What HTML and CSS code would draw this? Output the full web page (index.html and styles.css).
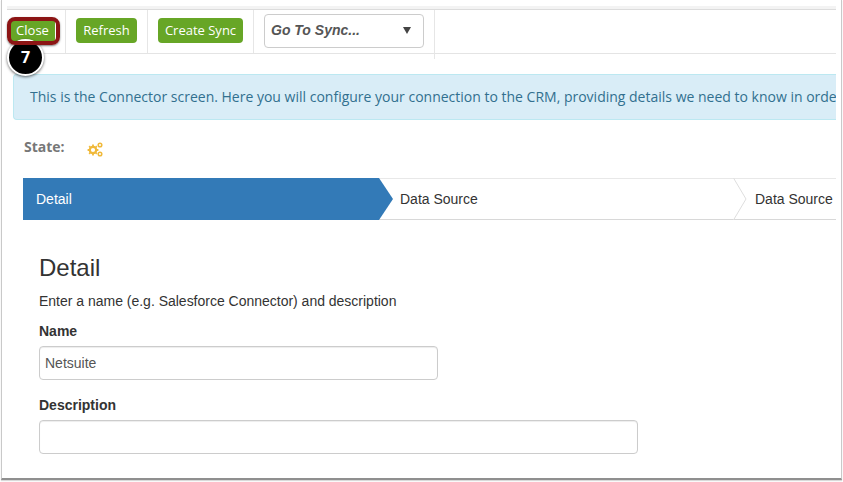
FILE: index.html
```html
<!DOCTYPE html>
<html lang="en">
<head>
<meta charset="utf-8">
<title>Connector</title>
<link rel="stylesheet" href="styles.css">
</head>
<body>
<div class="window">
  <div class="page">
    <div class="topband"></div>
    <div class="toolbar">
      <div class="tool tool-close"><button class="btn">Close</button></div>
      <div class="tool tool-refresh"><button class="btn">Refresh</button></div>
      <div class="tool tool-create"><button class="btn">Create Sync</button></div>
      <div class="tool tool-select">
        <div class="select"><span>Go To Sync...</span><i class="caret"></i></div>
      </div>
    </div>
    <div class="alert">This is the Connector screen. Here you will configure your connection to the CRM, providing details we need to know in order to connect to your data and keep it in sync.</div>
    <div class="state">
      <span class="state-label">State:</span>
      <svg class="gears" viewBox="0 0 16 15" width="16" height="15" aria-hidden="true">
        <g fill="none" stroke="#f0b93a">
          <circle cx="6" cy="8" r="3.2" stroke-width="2.2"/>
          <path d="M6 2.600v1.600M6 11.800v1.600M.6 8h1.600M9.800 8h1.600M2.200 4.200l1.100 1.100M8.700 10.700l1.100 1.100M2.200 11.800l1.100-1.100M8.700 5.300l1.100-1.100" stroke-width="1.800"/>
          <circle cx="13" cy="3" r="1.800" stroke-width="1.500"/>
          <circle cx="13" cy="12" r="1.800" stroke-width="1.500"/>
        </g>
      </svg>
    </div>
    <div class="steps">
      <div class="step step-active">Detail</div>
      <div class="step step-two">Data Source</div>
      <div class="step step-three">Data Source</div>
      <svg class="chevron chevron-blue" viewBox="0 0 15 42" width="15" height="42" aria-hidden="true">
        <path d="M0 0 L14 21 L0 42 Z" fill="#337ab7"/>
      </svg>
      <svg class="chevron chevron-grey" viewBox="0 0 15 42" width="15" height="42" aria-hidden="true">
        <path d="M0.500 0 L13 21 L0.500 42" fill="#fff" stroke="#dedede"/>
      </svg>
    </div>
    <div class="detail">
      <h3>Detail</h3>
      <p>Enter a name (e.g. Salesforce Connector) and description</p>
      <label for="name">Name</label>
      <input id="name" class="input input-name" type="text" value="Netsuite">
      <label for="desc" class="label-desc">Description</label>
      <input id="desc" class="input input-desc" type="text">
    </div>
  </div>
  <div class="badge">7</div>
  <div class="callout-box"></div>
</div>
</body>
</html>
```
FILE: styles.css
```css
* { box-sizing: border-box; }
html, body { margin: 0; padding: 0; background: #fff; }
body { width: 843px; height: 482px; overflow: hidden; }

.window {
  position: relative;
  width: 841px;
  height: 480px;
  margin-left: 1px;
  background: #fff;
  border-left: 1px solid #c9c9c9;
  border-right: 1px solid #c9c9c9;
  border-bottom: 2px solid #8f8f8f;
  box-shadow: 0 1px 1px rgba(0,0,0,.15);
  overflow: hidden;
}
.page {
  width: 834px;
  padding-top: 6px;
  overflow: hidden;
  height: 478px;
}
.topband {
  height: 4px;
  margin-left: 5px;
  background: #f3f3f3;
  border-bottom: 1px solid #dcdcdc;
}
.toolbar {
  display: flex;
  height: 44px;
  margin-left: 5px;
  border-bottom: 1px solid #e4e4e4;
}
.tool {
  display: flex;
  align-items: flex-start;
  height: 43px;
  padding-top: 8px;
  border-right: 1px solid #e6e6e6;
}
.tool-close { width: 59px; padding-left: 3px; }
.tool-refresh { width: 82px; padding-left: 10px; }
.tool-create { width: 106px; padding-left: 10px; }
.tool-select { width: 181px; height: 49px; padding: 4px 0 0 10px; }

.btn {
  height: 25px;
  padding: 0 0 2px;
  border: 0;
  border-radius: 4px;
  background: #67a626;
  color: #fff;
  font: 13px/22px "Open Sans", sans-serif;
}
.tool-close .btn { width: 45px; }
.tool-refresh .btn { width: 61px; }
.tool-create .btn { width: 85px; }

.select {
  display: flex;
  align-items: center;
  justify-content: space-between;
  width: 160px;
  height: 34px;
  padding: 0 12px 2px 6px;
  border: 1px solid #ccc;
  border-radius: 4px;
  color: #555;
  font: italic bold 14px "Liberation Sans", sans-serif;
}
.caret {
  width: 0;
  height: 0;
  margin-top: 1px;
  border-left: 4px solid transparent;
  border-right: 4px solid transparent;
  border-top: 7px solid #444;
}

.alert {
  height: 46px;
  margin: 20px 0 0 11px;
  padding: 0 0 0 16px;
  background: #d9edf7;
  border: 1px solid #bce8f1;
  border-right: 0;
  border-radius: 4px 0 0 4px;
  color: #31708f;
  font: 14px/44px "Open Sans", sans-serif;
  white-space: nowrap;
  overflow: hidden;
}

.state {
  display: flex;
  align-items: center;
  height: 58px;
  padding-left: 22px;
}
.state-label {
  width: 63px;
  margin-top: -5px;
  color: #777;
  font: bold 14px "Open Sans", sans-serif;
}
.gears { margin-top: 1px; }

.steps {
  position: relative;
  display: flex;
  height: 42px;
  margin-left: 21px;
  border-top: 1px solid #e8e8e8;
  border-bottom: 1px solid #d8d8d8;
  font: 14px/40px "Liberation Sans", sans-serif;
  color: #333;
  white-space: nowrap;
}
.step { flex: none; }
.step-active {
  width: 356px;
  margin-top: -1px;
  margin-bottom: -1px;
  padding-left: 13px;
  line-height: 42px;
  background: #337ab7;
  color: #fff;
}
.step-two { width: 355px; padding-left: 21px; }
.step-three { padding-left: 21px; }
.chevron { position: absolute; top: -1px; }
.chevron-blue { left: 356px; }
.chevron-grey { left: 710px; }

.detail { padding: 33px 0 0 37px; color: #333; font-family: "Liberation Sans", sans-serif; }
.detail h3 {
  margin: 0;
  font-size: 24px;
  font-weight: 400;
  line-height: 30px;
}
.detail p {
  margin: 8px 0 0;
  font-size: 14px;
  line-height: 20px;
  letter-spacing: -.01px;
}
.detail label {
  display: block;
  margin-top: 10px;
  font-size: 14px;
  font-weight: 700;
  line-height: 20px;
}
.detail .label-desc { margin-top: 15px; }
.input {
  display: block;
  height: 34px;
  margin-top: 5px;
  padding: 0 5px;
  border: 1px solid #ccc;
  border-radius: 4px;
  color: #555;
  font: 14px "Liberation Sans", sans-serif;
  box-shadow: inset 0 1px 1px rgba(0,0,0,.075);
}
.input-name { width: 399px; }
.input-desc { width: 599px; }

.callout-box {
  position: absolute;
  left: 5px;
  top: 17px;
  width: 53px;
  height: 28px;
  border: 4px solid #8c1515;
  border-radius: 8px;
  box-shadow: 0 1px 2px rgba(0,0,0,.5);
}
.badge {
  position: absolute;
  left: 5px;
  top: 39px;
  width: 37px;
  height: 37px;
  border: 2px solid #fff;
  border-radius: 50%;
  background: #000;
  color: #fff;
  box-shadow: 0 1px 3px rgba(0,0,0,.6);
  text-align: center;
  font: bold 16px/33px "Open Sans", sans-serif;
}
```
